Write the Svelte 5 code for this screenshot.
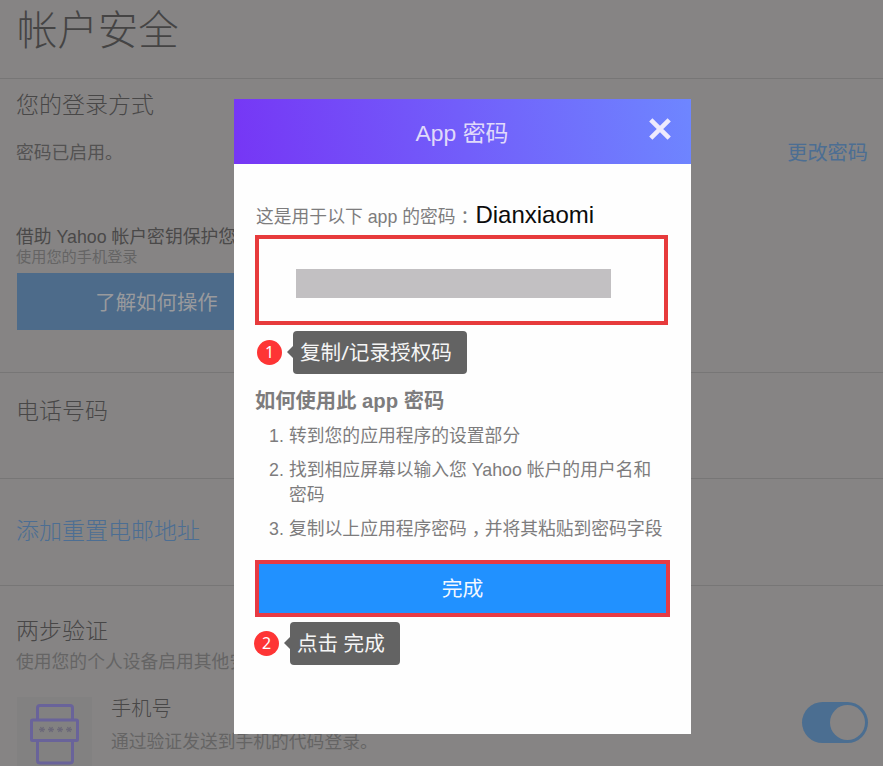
<script lang="ts">
	const steps = [
		['转到您的应用程序的设置部分'],
		['找到相应屏幕以输入您 Yahoo 帐户的用户名和密码'],
		['复制以上应用程序密码', '并将其粘贴到密码字段']
	];
</script>

<div class="page">
	<header>
		<h1>帐户安全</h1>
	</header>

	<section class="login">
		<h2>您的登录方式</h2>
		<div class="row">
			<p>密码已启用。</p>
			<a class="change" href="#password">更改密码</a>
		</div>
		<p class="key">借助 Yahoo 帐户密钥保护您</p>
		<p class="hint">使用您的手机登录</p>
		<button class="learn">了解如何操作</button>
	</section>

	<section class="phone">
		<h2>电话号码</h2>
	</section>

	<section class="email">
		<h2><a href="#email">添加重置电邮地址</a></h2>
	</section>

	<section class="two-step">
		<h2>两步验证</h2>
		<p class="muted">使用您的个人设备启用其他安</p>
		<div class="method">
			<div class="icon">
				<svg width="75" height="69" viewBox="0 0 75 69" fill="none" stroke="#69639a" stroke-width="3">
					<path d="M20.500 22V11q0-2.500 2.500-2.500h30q2.500 0 2.500 2.500v11" />
					<rect x="14.500" y="23" width="46" height="20.500" rx="1" />
					<path d="M20.500 44v19.500q0 2.500 2.500 2.500h30q2.500 0 2.500-2.500V44" />
					<g stroke="#6b6878" stroke-width="1.300">
						<path d="M22 32.500h6M23.500 30l3 5M26.500 30l-3 5" />
						<path d="M31 32.500h6M32.500 30l3 5M35.500 30l-3 5" />
						<path d="M40 32.500h6M41.500 30l3 5M44.500 30l-3 5" />
						<path d="M49 32.500h6M50.500 30l3 5M53.500 30l-3 5" />
					</g>
				</svg>
			</div>
			<div class="method-text">
				<h3>手机号</h3>
				<p class="muted">通过验证发送到手机的代码登录。</p>
			</div>
			<div class="toggle"><span></span></div>
		</div>
	</section>
</div>

<div class="dialog">
	<div class="dialog-head">
		<span class="dialog-title">App 密码</span>
		<button class="close" aria-label="关闭">
			<svg width="22" height="22" viewBox="0 0 22 22" stroke="#eeeafd" stroke-width="4.600">
				<path d="M1.800 1.800l18.400 18.400M20.200 1.800L1.800 20.200" />
			</svg>
		</button>
	</div>
	<div class="dialog-body">
		<p class="intro">
			这是用于以下 app 的密码<span class="punct">：</span><span class="app-name">Dianxiaomi</span>
		</p>
		<div class="password"><span></span></div>
		<div class="note">
			<span class="badge">1</span>
			<span class="tip">复制/记录授权码</span>
		</div>
		<h4>如何使用此 app 密码</h4>
		<ol>
			{#each steps as parts, i}
				<li>
					<span class="num">{i + 1}.</span>
					<span>{parts[0]}{#if parts[1]}<span class="punct">，</span>{parts[1]}{/if}</span>
				</li>
			{/each}
		</ol>
		<button class="done">完成</button>
		<div class="note second">
			<span class="badge">2</span>
			<span class="tip">点击 完成</span>
		</div>
	</div>
</div>

<style>
	:global(body) {
		background: #868484;
		overflow: hidden;
	}

	.page,
	.dialog {
		font-family: 'Liberation Sans', 'Noto Sans CJK SC', sans-serif;
		font-size: 17.8px;
		box-sizing: border-box;
	}

	.page {
		height: 766px;
		overflow: hidden;
		color: #535252;
	}

	h1,
	h2,
	h3,
	h4,
	p,
	ol {
		margin: 0;
		padding: 0;
		font-weight: 400;
		white-space: nowrap;
	}

	h1,
	h2,
	h3 {
		font-weight: 300;
	}

	button {
		display: block;
		border: 0;
		padding: 0;
		font-family: inherit;
	}

	a {
		color: #4c6e93;
		text-decoration: none;
	}

	header {
		height: 78px;
		border-bottom: 1px solid #777676;
	}

	h1 {
		padding-left: 17px;
		padding-top: 1px;
		font-size: 40.4px;
		line-height: 60px;
		color: #454444;
	}

	section {
		box-sizing: border-box;
		padding: 0 15px 0 16px;
		border-bottom: 1px solid #777676;
	}

	h2 {
		font-size: 23px;
		line-height: 30px;
		color: #484747;
	}

	.login {
		height: 294px;
		padding-top: 11px;
	}

	.row {
		display: flex;
		justify-content: space-between;
		margin-top: 21px;
		line-height: 24px;
	}

	.change {
		font-size: 20.2px;
	}

	.key {
		margin-top: 61px;
		line-height: 22px;
		color: #4a4949;
	}

	.hint {
		font-size: 15.2px;
		line-height: 18px;
		color: #656464;
	}

	.learn {
		width: 279px;
		height: 57px;
		margin: 7px 0 0 1px;
		padding-bottom: 2px;
		background: #4d6b8a;
		color: #999a9d;
		font-size: 20.4px;
	}

	.phone {
		height: 106px;
		padding-top: 23px;
	}

	.email {
		height: 107px;
		padding-top: 37px;
	}

	.two-step {
		padding-top: 30px;
		border-bottom: 0;
	}

	.two-step .muted {
		color: #656464;
		line-height: 22px;
	}

	h2 + .muted {
		margin-top: 5px;
	}

	.method {
		display: flex;
		align-items: flex-start;
		margin-top: 24px;
	}

	.icon {
		width: 75px;
		height: 69px;
		margin-left: 1px;
		background: #828181;
	}

	.icon svg {
		display: block;
	}

	.method-text {
		flex: 1;
		margin-left: 19px;
	}

	h3 {
		font-size: 20.2px;
		line-height: 24px;
		color: #484747;
	}

	.method-text .muted {
		margin-top: 10px;
	}

	.toggle {
		display: flex;
		justify-content: flex-end;
		width: 66px;
		height: 41px;
		margin-top: 5px;
		padding: 3px;
		border-radius: 21px;
		box-sizing: border-box;
		background: #4b6e91;
	}

	.toggle span {
		width: 35px;
		height: 35px;
		border-radius: 50%;
		background: #868484;
	}

	.dialog {
		position: absolute;
		left: 234px;
		top: 99px;
		width: 457px;
		height: 635px;
		background: #fefefe;
		color: #7d7c7d;
	}

	.dialog-head {
		display: grid;
		grid-template-columns: 60px 1fr 60px;
		align-items: center;
		height: 65px;
		background: linear-gradient(80deg, #7636f5, #6e86ff);
	}

	.dialog-title {
		grid-column: 2;
		text-align: center;
		font-size: 22.9px;
		line-height: 30px;
		padding: 2px 1px 0 0;
		color: #e0dafa;
	}

	.close {
		width: 22px;
		height: 22px;
		margin: 0 0 5px 18px;
		background: none;
	}

	.close svg {
		display: block;
	}

	.dialog-body {
		padding: 36px 20px 0 21px;
	}

	.intro {
		padding-left: 1px;
		line-height: 34px;
		height: 30px;
	}

	/* centres full-width punctuation in its cell */
	.punct {
		padding-left: 5px;
		letter-spacing: -5px;
	}

	.app-name {
		margin-left: 2px;
		font-size: 24px;
		line-height: 20px;
		color: #0c0c0c;
	}

	.password {
		display: grid;
		place-items: center;
		box-sizing: border-box;
		width: 413px;
		height: 90px;
		margin-top: 5px;
		padding: 6px 17px 0 0;
		border: 4px solid #e73b3c;
	}

	.password span {
		width: 315px;
		height: 29px;
		background: #c2c0c2;
	}

	.note {
		display: flex;
		align-items: center;
		gap: 11px;
		margin: 6px 0 0 2px;
	}

	.badge {
		width: 25px;
		height: 25px;
		border-radius: 50%;
		background: #fe3535;
		color: #fff;
		font: 16px/25px 'Noto Sans', sans-serif;
		text-align: center;
	}

	.tip {
		position: relative;
		height: 43px;
		padding: 0 15px 0 7px;
		border-radius: 4px;
		background: #636363;
		color: #f5f5f5;
		font: 20.6px/43px 'Noto Sans', 'Noto Sans CJK SC', sans-serif;
		white-space: nowrap;
	}

	.tip::before {
		content: '';
		position: absolute;
		left: -6px;
		top: 15px;
		border: 6px solid transparent;
		border-left: 0;
		border-right-color: #636363;
	}

	h4 {
		margin-top: 12px;
		font-size: 20.3px;
		line-height: 30px;
		font-weight: 700;
	}

	ol {
		margin-top: 8px;
		list-style: none;
	}

	li {
		display: grid;
		grid-template-columns: 34px 378px;
		margin-bottom: 10px;
		line-height: 24.300px;
		white-space: normal;
	}

	.num {
		padding-left: 14px;
	}

	.done {
		box-sizing: border-box;
		width: 415px;
		height: 57px;
		margin-top: 19px;
		padding-bottom: 4px;
		border: 4px solid #e73b44;
		background: #2191ff;
		color: #f2f8ff;
		font-size: 20.8px;
	}

	.second {
		margin: 5px 0 0 -1px;
	}
</style>
